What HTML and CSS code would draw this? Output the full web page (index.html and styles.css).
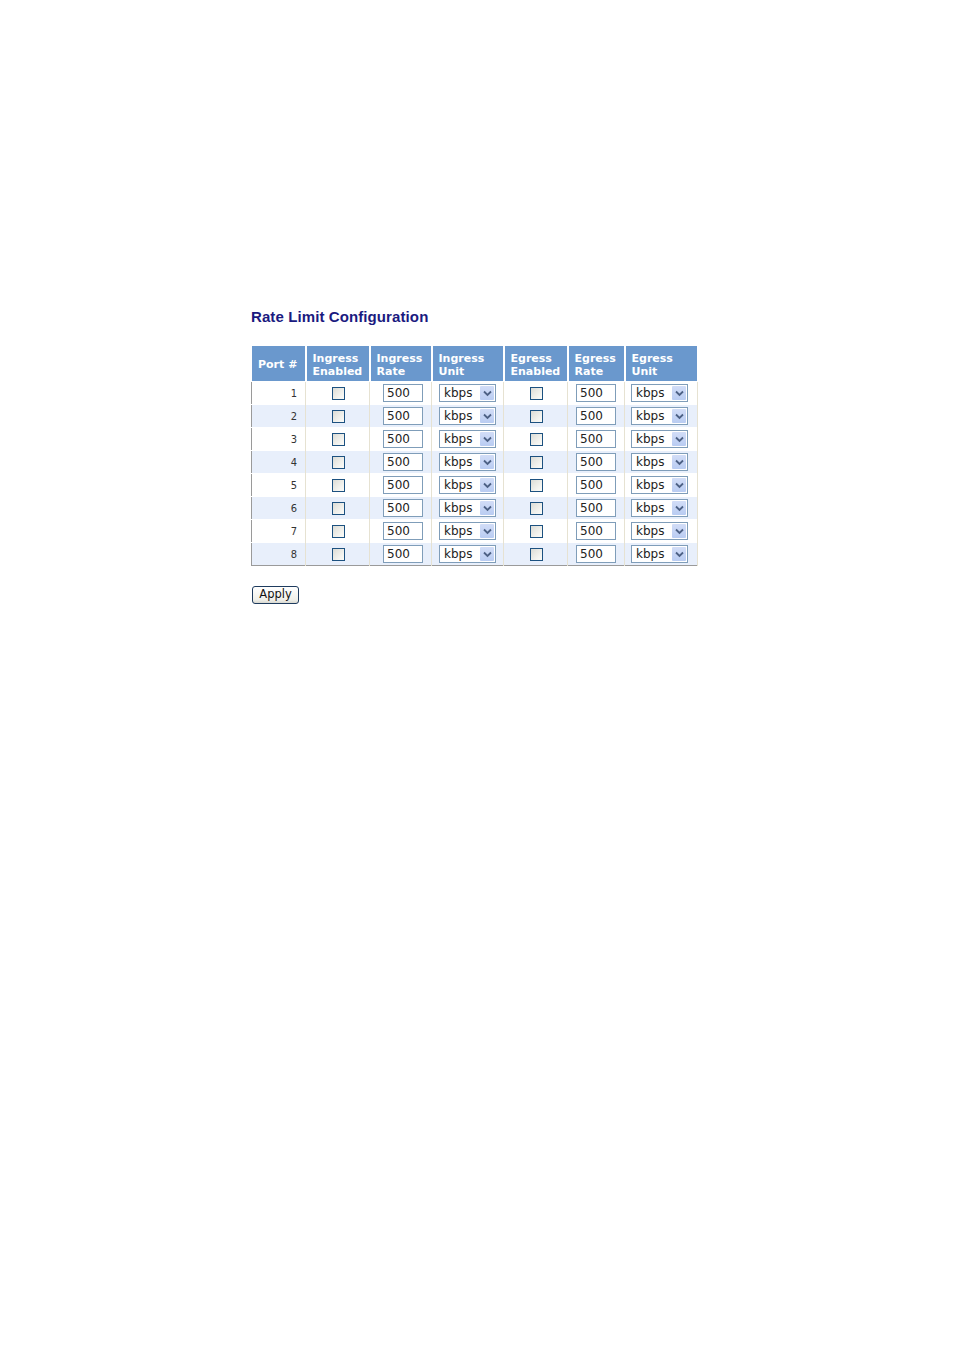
FILE: index.html
```html
<!DOCTYPE html>
<html>
<head>
<meta charset="utf-8">
<link rel="stylesheet" href="styles.css">
</head>
<body>
<div class="page">
  <h1 class="title">Rate Limit Configuration</h1>
  <table class="grid">
    <colgroup>
      <col class="c1"><col class="c2"><col class="c3"><col class="c4"><col class="c5"><col class="c6"><col class="c7">
    </colgroup>
    <thead>
      <tr>
        <th class="port-h">Port #</th>
        <th>Ingress<br>Enabled</th>
        <th>Ingress<br>Rate</th>
        <th>Ingress<br>Unit</th>
        <th>Egress<br>Enabled</th>
        <th>Egress<br>Rate</th>
        <th>Egress<br>Unit</th>
      </tr>
    </thead>
    <tbody id="rows"></tbody>
  </table>
  <button class="apply">Apply</button>
</div>
<script>
  var body = document.getElementById('rows');
  var sel = '<span class="sel"><span class="sel-t">kbps</span><span class="sel-b"><svg width="9" height="7" viewBox="0 0 9 7"><path d="M1 1.5 L4.5 5 L8 1.5" fill="none" stroke="#4d6185" stroke-width="1.8"/></svg></span></span>';
  var html = '';
  for (var i = 1; i <= 8; i++) {
    html += '<tr class="' + (i % 2 === 0 ? 'even' : 'odd') + '">' +
      '<td class="port">' + i + '</td>' +
      '<td class="ctr ie"><span class="cb"></span></td>' +
      '<td class="ctr ir"><span class="inp">500</span></td>' +
      '<td class="ctr iu">' + sel + '</td>' +
      '<td class="ctr ee"><span class="cb"></span></td>' +
      '<td class="ctr er"><span class="inp">500</span></td>' +
      '<td class="ctr eu">' + sel + '</td>' +
      '</tr>';
  }
  body.innerHTML = html;
</script>
</body>
</html>
```

FILE: styles.css
```css
html, body {
  margin: 0;
  padding: 0;
  background: #fff;
}
.page {
  padding: 308px 0 0 251px;
  font-family: "DejaVu Sans", Verdana, sans-serif;
}
.title {
  margin: 0 0 19px 0;
  font-family: "Liberation Sans", Arial, sans-serif;
  font-weight: bold;
  font-size: 15px;
  line-height: 18px;
  color: #1a1a80;
  letter-spacing: 0.1px;
}
.grid {
  border-collapse: collapse;
  table-layout: fixed;
  width: 447px;
  border: 1px solid #9a9a9a;
}
.c1 { width: 54px; }
.c2 { width: 64px; }
.c3 { width: 62px; }
.c4 { width: 72px; }
.c5 { width: 64px; }
.c6 { width: 57px; }
.c7 { width: 73px; }
.grid th {
  background: #6a98cd;
  color: #fff;
  font-family: "DejaVu Sans", Verdana, sans-serif;
  font-weight: bold;
  font-size: 11px;
  line-height: 13px;
  text-align: left;
  padding: 5px 0 3px 6px;
  height: 27px;
  border-right: 2px solid #fff;
  border-top: 1px solid #fff;
  white-space: nowrap;
}
.grid th:first-child { border-left: 1px solid #fff; }
.grid th:last-child { border-right: 1px solid #fff; }
.grid th.port-h {
  font-size: 11px;
  padding-left: 6px;
}
.grid td {
  height: 22px;
  padding: 0;
  border-right: 1px solid #e6e2d2;
  border-top: 1px solid #fff;
  font-size: 11px;
  color: #222;
  vertical-align: middle;
}
.grid tr.even td { background: #e8effb; }
.grid td.port {
  text-align: right;
  padding-right: 8px;
  font-family: "DejaVu Sans Condensed", "DejaVu Sans", sans-serif;
  font-size: 11px;
  color: #333;
}
.grid td.ctr { text-align: center; }
.grid td.ie { padding-left: 2px; }
.grid td.ir { padding-left: 5px; }
.grid td.ee { padding-left: 2px; }
.grid td.eu { padding-right: 3px; }
.cb {
  display: inline-block;
  width: 11px;
  height: 11px;
  border: 1px solid #1c5180;
  background: linear-gradient(135deg, #dcdcd6 0%, #f4f4f0 70%, #fbfbf8 100%);
  vertical-align: middle;
}
.inp {
  display: inline-block;
  box-sizing: border-box;
  width: 40px;
  height: 18px;
  border: 1px solid #7f9db9;
  background: #fff;
  text-align: left;
  padding: 1px 0 0 3px;
  font-family: "DejaVu Sans", Verdana, sans-serif;
  font-size: 12px;
  line-height: 15px;
  color: #222;
  vertical-align: middle;
}
.sel {
  display: inline-flex;
  box-sizing: border-box;
  width: 57px;
  height: 18px;
  border: 1px solid #7f9db9;
  background: #fff;
  align-items: center;
  justify-content: space-between;
  vertical-align: middle;
  text-align: left;
}
.sel-t {
  padding-left: 4px;
  font-family: "DejaVu Sans", Verdana, sans-serif;
  font-size: 12px;
  line-height: 15px;
  color: #222;
}
.sel-b {
  width: 14px;
  height: 14px;
  margin-right: 1px;
  background: linear-gradient(180deg, #d2ddf7 0%, #b9ccf2 100%);
  border-radius: 1px;
  display: flex;
  align-items: center;
  justify-content: center;
}
.apply {
  display: block;
  margin: 20px 0 0 1px;
  width: 47px;
  height: 18px;
  padding: 0 0 1px 0;
  border: 1px solid #1e3b5e;
  border-radius: 3px;
  background: linear-gradient(180deg, #ffffff 0%, #f0f0ea 80%, #d8d8d0 100%);
  font-family: "DejaVu Sans", Verdana, sans-serif;
  font-size: 11.5px;
  line-height: 15px;
  color: #111;
}
```
